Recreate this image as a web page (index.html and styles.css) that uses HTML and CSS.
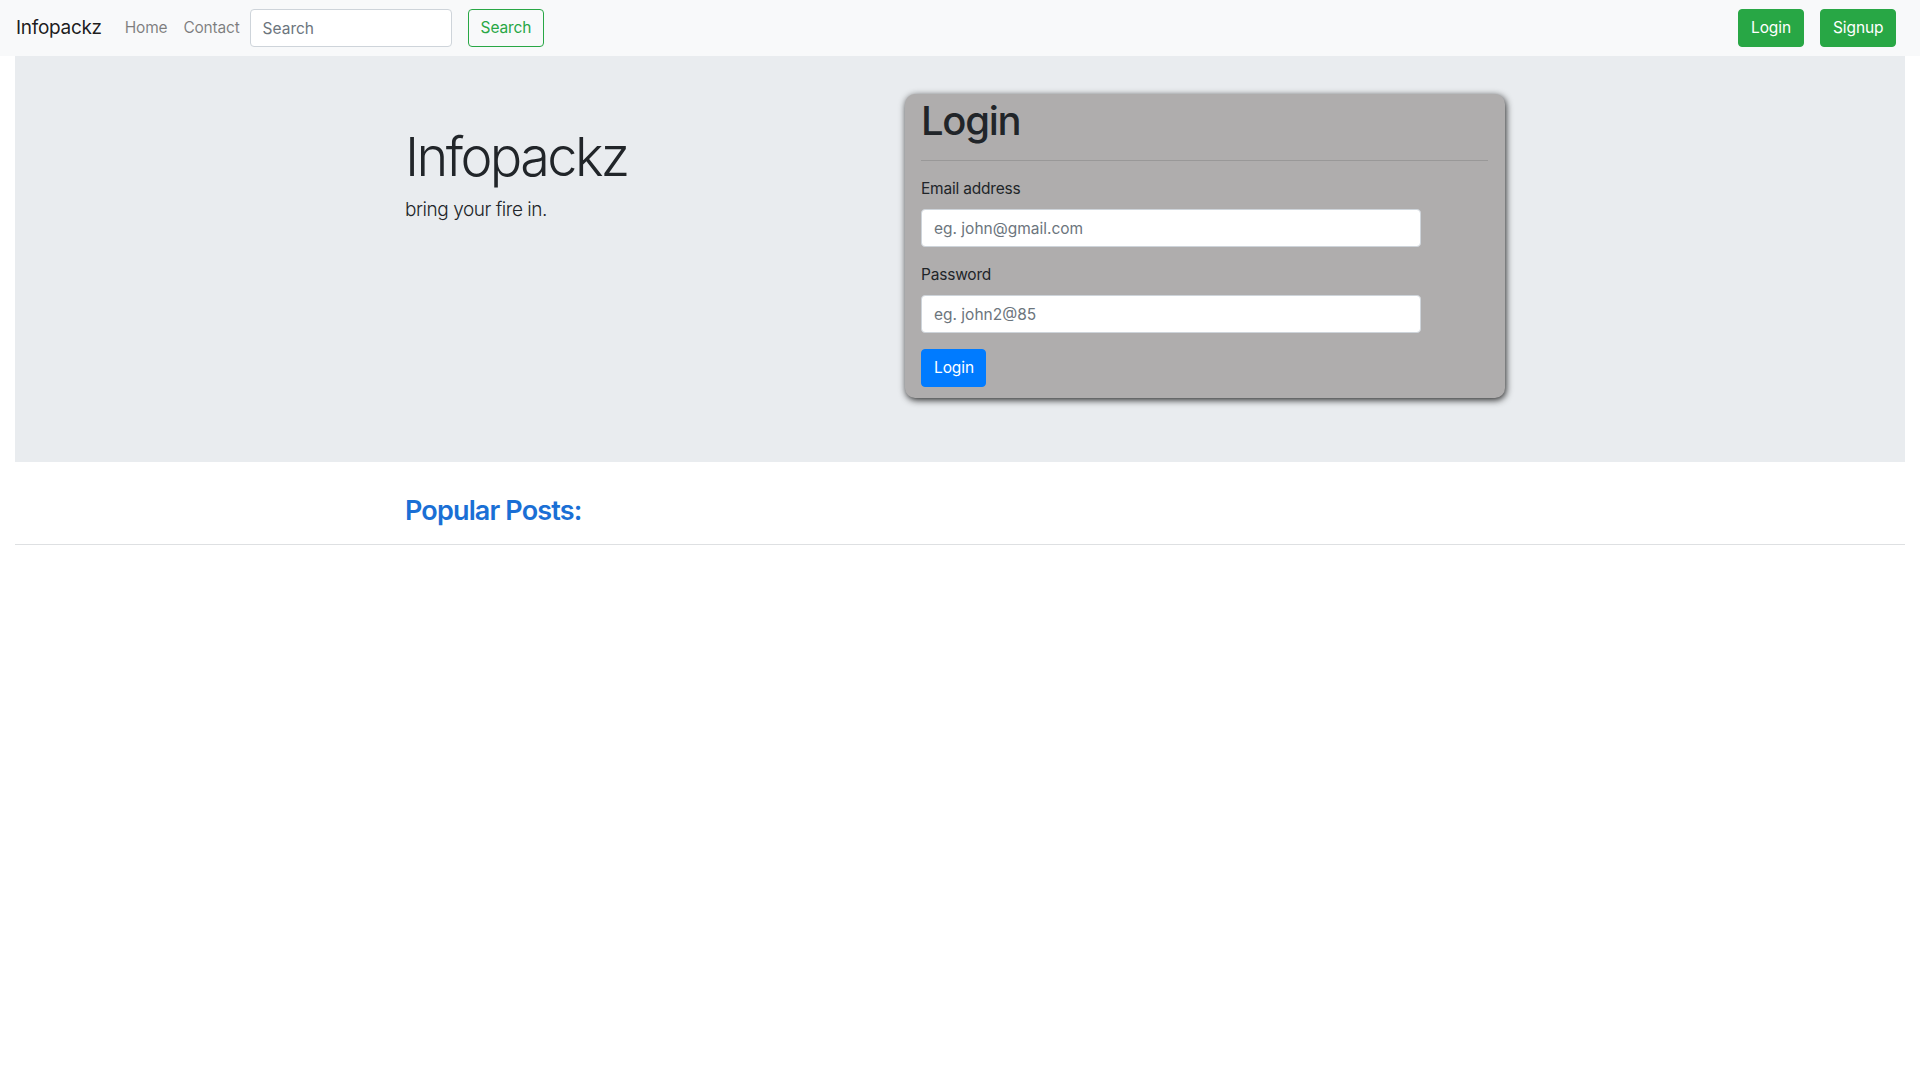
FILE: index.html
```html
<!DOCTYPE html>
<html lang="en">
<head>
<meta charset="utf-8">
<title>Infopackz</title>
<link rel="stylesheet" href="styles.css">
</head>
<body>
<nav class="navbar">
  <a class="brand" href="#">Infopackz</a>
  <ul class="nav-links">
    <li><a href="#">Home</a></li>
    <li><a href="#">Contact</a></li>
  </ul>
  <form class="nav-search">
    <input class="form-control search-input" type="search" placeholder="Search">
    <button class="btn btn-outline-success" type="button">Search</button>
  </form>
  <div class="nav-right">
    <button class="btn btn-success" type="button">Login</button>
    <button class="btn btn-success" type="button">Signup</button>
  </div>
</nav>

<section class="jumbotron">
  <div class="container hero">
    <div class="hero-text">
      <h1 class="display">Infopackz</h1>
      <p class="lead">bring your fire in.</p>
    </div>
    <div class="login-card">
      <h1 class="card-title">Login</h1>
      <hr class="card-rule">
      <form class="login-form">
        <div class="form-group">
          <label>Email address</label>
          <input class="form-control" type="email" placeholder="eg. john@gmail.com">
        </div>
        <div class="form-group">
          <label>Password</label>
          <input class="form-control" type="password" placeholder="eg. john2@85">
        </div>
        <button class="btn btn-primary" type="button">Login</button>
      </form>
    </div>
  </div>
</section>

<section class="posts">
  <div class="container">
    <h3 class="posts-title">Popular Posts:</h3>
  </div>
  <hr class="posts-rule">
</section>
</body>
</html>
```

FILE: styles.css
```css
* { box-sizing: border-box; }

html, body {
  margin: 0;
  padding: 0;
  background: #fff;
}

body {
  font-family: Inter, Roboto, "Liberation Sans", sans-serif;
  font-size: 16px;
  line-height: 1.5;
  color: #212529;
}

a { text-decoration: none; }

.navbar {
  display: flex;
  align-items: center;
  height: 56px;
  padding: 0 24px 0 16px;
  background: #f8f9fa;
}

.brand {
  font-size: 19px;
  color: rgba(0, 0, 0, 0.9);
  margin-right: 15px;
  line-height: 30px;
  letter-spacing: -0.3px;
}

.nav-links {
  display: flex;
  list-style: none;
  margin: 0;
  padding: 0;
}

.nav-links a {
  display: block;
  padding: 8px;
  color: rgba(0, 0, 0, 0.5);
  font-size: 15.5px;
  letter-spacing: -0.2px;
}

.nav-search {
  display: flex;
  align-items: center;
  gap: 16px;
  margin-left: 2px;
}

.form-control {
  display: block;
  height: 38px;
  padding: 6px 12px;
  font-family: inherit;
  font-size: 15.5px;
  color: #495057;
  background: #fff;
  border: 1px solid #ced4da;
  border-radius: 4px;
  outline: none;
}

.form-control::placeholder {
  color: #6c757d;
  opacity: 1;
}

.search-input { width: 202px; }

.btn {
  display: inline-block;
  height: 38px;
  padding: 0 12px;
  font-family: inherit;
  font-size: 15.5px;
  line-height: 36px;
  border: 1px solid transparent;
  border-radius: 4px;
  cursor: pointer;
  letter-spacing: -0.1px;
}

.btn-outline-success {
  color: #28a745;
  background: transparent;
  border-color: #28a745;
  width: 76px;
}

.btn-success {
  color: #fff;
  background: #28a745;
  border-color: #28a745;
}

.nav-right {
  margin-left: auto;
  display: flex;
  gap: 16px;
}

.nav-right .btn:first-child { width: 66px; }
.nav-right .btn:last-child { width: 76px; }

.jumbotron {
  margin: 0 15px;
  background: #e9ecef;
  padding: 38px 0 64px;
}

.container {
  width: 1110px;
  margin: 0 auto;
}

.hero {
  display: flex;
  align-items: flex-start;
}

.hero-text {
  width: 500px;
  padding-top: 29px;
}

.display {
  margin: 0 0 5px;
  font-size: 54px;
  font-weight: 300;
  line-height: 67px;
  letter-spacing: -2.6px;
}

.lead {
  margin: 0;
  font-size: 19px;
  font-weight: 300;
  line-height: 30px;
  letter-spacing: -0.45px;
}

.login-card {
  width: 600px;
  background: #afadad;
  border-radius: 10px;
  padding: 3px 17px 11px 16px;
  box-shadow: 1px 2px 7px rgba(0, 0, 0, 0.85);
}

.card-title {
  margin: 0;
  font-size: 40px;
  font-weight: 500;
  line-height: 48px;
  letter-spacing: -1.3px;
}

.card-rule {
  margin: 15px 0 16px;
  border: 0;
  border-top: 1px solid rgba(0, 0, 0, 0.12);
}

.login-form .form-group {
  margin-bottom: 16px;
}

.login-form label {
  display: block;
  margin-bottom: 8px;
  font-size: 15.5px;
  line-height: 24px;
  letter-spacing: -0.2px;
}

.login-form .form-control {
  width: 500px;
}

.btn-primary {
  color: #fff;
  background: #007bff;
  border-color: #007bff;
  width: 65px;
}

.posts {
  padding-top: 32px;
}

.posts-title {
  margin: 0;
  font-size: 27px;
  font-weight: 600;
  line-height: 34px;
  color: #1a6fd5;
  letter-spacing: -0.85px;
}

.posts-rule {
  margin: 16px 15px 0;
  border: 0;
  border-top: 1px solid #dee0e2;
}
```
